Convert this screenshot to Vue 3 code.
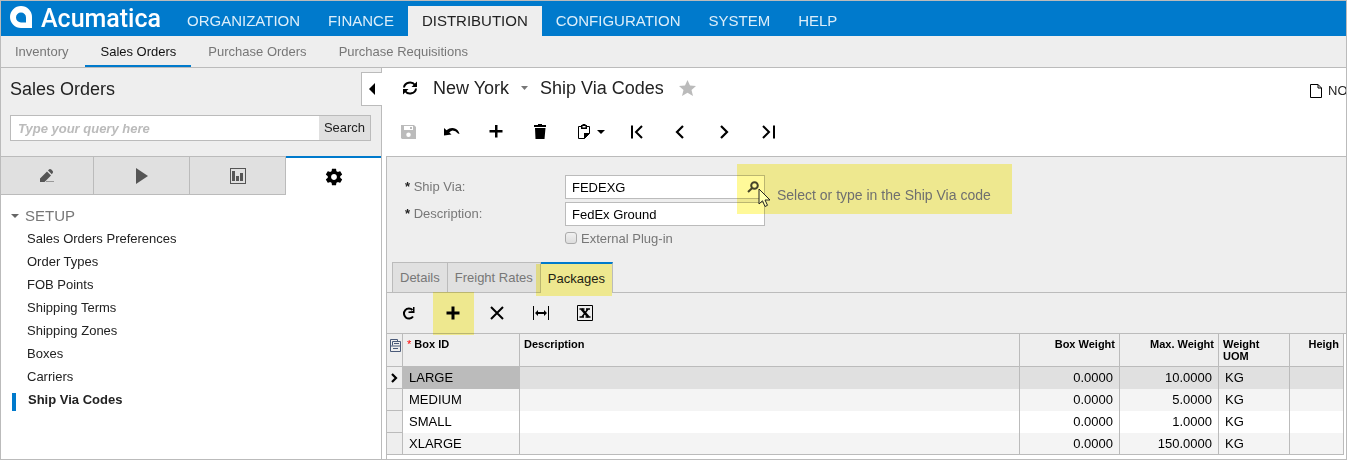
<script setup>
import { ref } from 'vue'

const modules = ['ORGANIZATION', 'FINANCE', 'DISTRIBUTION', 'CONFIGURATION', 'SYSTEM', 'HELP']
const areas = ['Inventory', 'Sales Orders', 'Purchase Orders', 'Purchase Requisitions']
const screens = [
  'Sales Orders Preferences',
  'Order Types',
  'FOB Points',
  'Shipping Terms',
  'Shipping Zones',
  'Boxes',
  'Carriers',
  'Ship Via Codes',
]
const boxes = [
  { id: 'LARGE', box: '0.0000', max: '10.0000', uom: 'KG' },
  { id: 'MEDIUM', box: '0.0000', max: '5.0000', uom: 'KG' },
  { id: 'SMALL', box: '0.0000', max: '1.0000', uom: 'KG' },
  { id: 'XLARGE', box: '0.0000', max: '150.0000', uom: 'KG' },
]
const query = ref('')
const shipVia = ref('FEDEXG')
const description = ref('FedEx Ground')
const plugin = ref(false)
</script>

<template>
  <div class="app">
    <header class="top">
      <a class="brand" href="#">
        <svg width="22" height="22" viewBox="0 0 22 22" aria-hidden="true">
          <path fill="#fff" fill-rule="evenodd" d="M11 0A11 11 0 0 1 22 11V22H11A11 11 0 0 1 11 0ZM11 6.500A5 5 0 0 0 6 11.500A5 5 0 0 0 11 16.500H16V11.500A5 5 0 0 0 11 6.500Z" />
        </svg>
        <span>Acumatica</span>
      </a>
      <nav class="modules">
        <a v-for="m in modules" :key="m" href="#" :class="{ active: m === 'DISTRIBUTION' }">{{ m }}</a>
      </nav>
    </header>
    <nav class="areas">
      <a v-for="a in areas" :key="a" href="#" :class="{ active: a === 'Sales Orders' }">{{ a }}</a>
    </nav>

    <div class="body">
      <aside class="side">
        <div class="side-head">
          <h2>Sales Orders</h2>
          <button class="collapse" aria-label="Collapse">
            <svg width="6" height="12" viewBox="0 0 6 12"><path d="M6 0V12L0 6Z" /></svg>
          </button>
        </div>
        <form class="search" @submit.prevent>
          <input v-model="query" type="text" aria-label="Search query" placeholder="Type your query here" />
          <button type="submit">Search</button>
        </form>
        <div class="side-tabs">
          <button aria-label="Data entry">
            <svg width="16" height="16" viewBox="0 0 16 16" fill="#555">
              <path d="M1 10.500L8 3.500L12 7.500L5.500 14H1ZM9 2.500L10.200 1.300Q11.200 .5 12.300 1.500L13.700 2.900Q14.500 4 13.700 5L12.800 6.300Z" />
              <path fill="#999" d="M7 13H15V14H7Z" />
            </svg>
          </button>
          <button aria-label="Processes">
            <svg width="12" height="16" viewBox="0 0 12 16"><path fill="#555" d="M0 0L12 8L0 16Z" /></svg>
          </button>
          <button aria-label="Reports">
            <svg width="16" height="16" viewBox="0 0 16 16">
              <path fill="#555" fill-rule="evenodd" d="M0 0H16V16H0ZM1 1V15H15V1ZM2 3H5V13H2ZM6 8H9V13H6ZM10 5H13V13H10Z" />
            </svg>
          </button>
          <button class="active" aria-label="Configuration">
            <svg width="20" height="20" viewBox="0 0 24 24">
              <path d="M19.43 12.98c.04-.32.07-.64.07-.98s-.03-.66-.07-.98l2.110-1.650c.19-.15.24-.42.12-.64l-2-3.460c-.12-.22-.39-.3-.61-.22l-2.490 1c-.52-.4-1.080-.73-1.690-.98l-.38-2.650C14.460 2.180 14.250 2 14 2h-4c-.25 0-.46.18-.49.42l-.38 2.650c-.61.25-1.170.59-1.690.98l-2.490-1c-.23-.09-.49 0-.61.22l-2 3.460c-.13.22-.07.49.12.64l2.110 1.650c-.04.32-.07.65-.07.98s.03.66.07.98l-2.110 1.650c-.19.15-.24.42-.12.64l2 3.460c.12.22.39.3.61.22l2.490-1c.52.4 1.080.73 1.690.98l.38 2.650c.03.24.24.42.49.42h4c.25 0 .46-.18.49-.42l.38-2.650c.61-.25 1.170-.59 1.690-.98l2.490 1c.23.09.49 0 .61-.22l2-3.460c.12-.22.07-.49-.12-.64l-2.110-1.650zM12 15.500c-1.930 0-3.500-1.570-3.500-3.500s1.570-3.500 3.500-3.500 3.500 1.570 3.500 3.500-1.570 3.500-3.500 3.500z" />
            </svg>
          </button>
        </div>
        <div class="tree">
          <div class="group">
            <svg width="8" height="4" viewBox="0 0 8 4"><path fill="#666" d="M0 0H8L4 4Z" /></svg>
            <span>SETUP</span>
          </div>
          <ul>
            <li v-for="s in screens" :key="s" :class="{ active: s === 'Ship Via Codes' }"><a href="#">{{ s }}</a></li>
          </ul>
        </div>
      </aside>

      <main class="main">
        <div class="title">
          <button class="plain refresh" aria-label="Refresh page">
            <svg width="16" height="16" viewBox="0 0 16 16">
              <path fill="none" stroke="#000" stroke-width="2" d="M2 7.500A6 5.500 0 0 1 13 5M14 8.500A6 5.500 0 0 1 3 11" />
              <path d="M15 1.500V7H9.500ZM1 14.500V9H6.500Z" />
            </svg>
          </button>
          <button class="plain branch">New York
            <svg width="7" height="4" viewBox="0 0 7 4"><path fill="#777" d="M0 0H7L3.500 4Z" /></svg>
          </button>
          <h1>Ship Via Codes</h1>
          <button class="plain star" aria-label="Add to favorites">
            <svg width="17" height="16" viewBox="0 0 17 16"><path fill="#bbb" d="M8.500 0L11 5.500L17 6L12.500 10L14 16L8.500 12.800L3 16L4.500 10L0 6L6 5.500Z" /></svg>
          </button>
          <a class="notes" href="#">
            <svg width="12" height="14" viewBox="0 0 12 14"><path fill="none" stroke="#000" d="M.5.5H8L11.500 4V13.500H.5ZM8 .5V4H11.500" /></svg>
            <span>NO</span>
          </a>
        </div>

        <div class="toolbar">
          <button aria-label="Save">
            <svg width="15" height="14" viewBox="0 0 15 14"><path fill="#bbb" fill-rule="evenodd" d="M0 0H13L15 2V14H1L0 13ZM3 1V5H12V1ZM9 2H11V4H9ZM7.500 7.500A2.200 2.200 0 1 0 7.500 12A2.200 2.200 0 1 0 7.500 7.500Z" /></svg>
          </button>
          <button aria-label="Undo">
            <svg width="16" height="10" viewBox="0 0 16 10"><path d="M0 1L2.500 3.300Q6 .3 10 1.200Q14.500 2.500 15.500 7L14 6.500Q11.500 3.500 8.500 3.500Q6.500 3.800 5.300 5.500L7.500 7.500L0 8.500Z" /></svg>
          </button>
          <button aria-label="Add">
            <svg width="14" height="14" viewBox="0 0 14 14"><path d="M6 0H8.500V5H13.500V7.500H8.500V12.500H6V7.500H.5V5H6Z" /></svg>
          </button>
          <button aria-label="Delete">
            <svg width="12" height="16" viewBox="0 0 12 16"><path d="M0 1H4V0H8V1H12V3H0ZM1 4H11.500L10.500 15H1.500Z" /></svg>
          </button>
          <button class="wide" aria-label="Clipboard">
            <svg width="12" height="16" viewBox="0 0 12 16"><path fill="none" stroke="#000" d="M3.500 2.500H.5V14.500H6.500L11.500 9.500V2.500H8.500" /><path d="M3 1H4.500V0H7.500V1H9V5H3ZM6 9H12L6 15Z" /><path fill="#fff" d="M4.500 2H7.500V3.500H4.500Z" /></svg>
            <svg width="8" height="4" viewBox="0 0 8 4"><path d="M0 0H8L4 4Z" /></svg>
          </button>
          <button aria-label="First">
            <svg width="14" height="14" viewBox="0 0 14 14"><path fill="none" stroke="#000" stroke-width="2" d="M2 .5V13.500M12 1L6 7L12 13" /></svg>
          </button>
          <button aria-label="Previous">
            <svg width="14" height="14" viewBox="0 0 14 14"><path fill="none" stroke="#000" stroke-width="2.200" d="M9 1L3 7L9 13" /></svg>
          </button>
          <button aria-label="Next">
            <svg width="14" height="14" viewBox="0 0 14 14"><path fill="none" stroke="#000" stroke-width="2.200" d="M3 1L9 7L3 13" /></svg>
          </button>
          <button aria-label="Last">
            <svg width="14" height="14" viewBox="0 0 14 14"><path fill="none" stroke="#000" stroke-width="2" d="M12 .5V13.500M1 1L7 7L1 13" /></svg>
          </button>
        </div>

        <section class="panel">
          <div class="form">
            <label for="via"><b>*</b> Ship Via:</label>
            <div class="lookup">
              <input id="via" v-model="shipVia" type="text" />
              <button class="plain" aria-label="Look up">
                <svg width="12" height="12" viewBox="0 0 12 12" fill="none" stroke="#444" stroke-width="2"><circle cx="7.500" cy="4.500" r="3.300" /><path d="M5.200 7L1 11" /></svg>
              </button>
            </div>
            <label for="desc"><b>*</b> Description:</label>
            <input id="desc" v-model="description" type="text" />
            <label class="check"><input v-model="plugin" type="checkbox" />External Plug-in</label>
          </div>

          <div class="callout">Select or type in the Ship Via code</div>
          <svg class="cursor" width="13" height="20" viewBox="0 0 13 20"><path fill="#ffffb0" stroke="#222" d="M1 1V16L4.500 12.800L7 18.500L9.500 17.300L7 12H12Z" /></svg>

          <div class="tabs">
            <button>Details</button>
            <button>Freight Rates</button>
            <button class="active">Packages</button>
          </div>

          <div class="gridbar">
            <button aria-label="Refresh grid">
              <svg width="14" height="14" viewBox="0 0 14 14"><path fill="none" stroke="#000" stroke-width="2" d="M11 10.500A5 5 0 1 1 10.500 4" /><path d="M12.500 1V7H6.500V5.500L11 5V1Z" /></svg>
            </button>
            <button class="marked" aria-label="Add row">
              <svg width="14" height="14" viewBox="0 0 14 14"><path d="M5.500 .5H8.500V5.500H13.500V8.500H8.500V13.500H5.500V8.500H.5V5.500H5.500Z" /></svg>
            </button>
            <button aria-label="Delete row">
              <svg width="14" height="14" viewBox="0 0 14 14"><path fill="none" stroke="#000" stroke-width="2" d="M1 1L13 13M13 1L1 13" /></svg>
            </button>
            <button aria-label="Fit columns">
              <svg width="16" height="14" viewBox="0 0 16 14"><path d="M0 0H1V14H0ZM15 0H16V14H15ZM2 7L5 4V6H11V4L14 7L11 10V8H5V10Z" /></svg>
            </button>
            <button aria-label="Export to Excel">
              <svg width="16" height="16" viewBox="0 0 16 16"><path fill="none" stroke="#000" d="M.5.5H15.500V15.500H.5Z" /><path fill="none" stroke="#000" stroke-width="2.500" d="M4.500 4L11.500 12" /><path fill="none" stroke="#000" stroke-width="1.500" d="M11 4L5 12M2.500 4H7.500M9 4H13M2.500 12H7M8.500 12H13.500" /></svg>
            </button>
          </div>

          <div class="grid">
            <table>
              <colgroup>
                <col class="c-sel" /><col class="c-id" /><col /><col class="c-num" /><col class="c-max" /><col class="c-uom" /><col class="c-h" />
              </colgroup>
              <thead>
                <tr>
                  <th class="sel">
                    <svg width="11" height="13" viewBox="0 0 11 13" fill="none" stroke="#4a5a78"><path d="M.5 12.500V.5H7.500V2.500M2.500 6.500V2.500H10.500V12.500H.5M.5 7H10.500M4 4.500H9M3 9.500H8" /></svg>
                  </th>
                  <th class="req"><i>*</i> Box ID</th>
                  <th>Description</th>
                  <th class="num">Box Weight</th>
                  <th class="num">Max. Weight</th>
                  <th>Weight UOM</th>
                  <th class="num">Heigh</th>
                </tr>
              </thead>
              <tbody>
                <tr v-for="(b, i) in boxes" :key="b.id" :class="{ current: i === 0 }">
                  <td class="sel">
                    <svg v-if="i === 0" width="7" height="10" viewBox="0 0 7 10"><path fill="none" stroke="#000" stroke-width="2.200" d="M1 1L5 5L1 9" /></svg>
                  </td>
                  <td class="id">{{ b.id }}</td>
                  <td></td>
                  <td class="num">{{ b.box }}</td>
                  <td class="num">{{ b.max }}</td>
                  <td>{{ b.uom }}</td>
                  <td></td>
                </tr>
              </tbody>
            </table>
          </div>
        </section>
      </main>
    </div>
  </div>
</template>

<style>
body {
  margin: 0;
}
</style>

<style scoped>
* {
  box-sizing: border-box;
}
.app {
  --line: #bbb;
  --blue: #007acc;
  --panel: #eee;
  --mark: #fff999;
  display: flex;
  flex-direction: column;
  min-height: 100vh;
  border: 1px solid var(--line);
  overflow: hidden;
  background: #fff;
  color: #222;
  font: 13px/16px "Liberation Sans", Arial, sans-serif;
}
a {
  color: inherit;
  text-decoration: none;
}
button,
input {
  font: inherit;
  color: inherit;
  margin: 0;
}
button {
  padding: 0;
  border: 0;
  background: none;
}
svg {
  display: block;
  flex: none;
}
h1,
h2 {
  margin: 0;
  font-size: 18px;
  line-height: 24px;
  font-weight: normal;
}

.top {
  display: flex;
  height: 35px;
  background: var(--blue);
}
.brand {
  display: flex;
  align-items: flex-start;
  gap: 9px;
  width: 172px;
  padding: 5px 0 0 9px;
  color: #fff;
  font: 500 25px/26px Roboto, sans-serif;
}
.modules {
  display: flex;
  padding-top: 5px;
  font-size: 15px;
  line-height: 30px;
  color: #dceefa;
}
.modules a {
  padding: 0 14px;
}
.modules .active {
  background: var(--panel);
  color: #222;
}
.areas {
  display: flex;
  gap: 2px;
  height: 32px;
  border-bottom: 1px solid var(--line);
  background: var(--panel);
  color: #777;
  line-height: 31px;
}
.areas a {
  padding: 0 15px;
}
.areas a:first-child {
  padding-left: 14px;
}
.areas .active {
  color: #111;
  border-bottom: 2px solid var(--blue);
}

.body {
  display: flex;
  flex: 1;
}
.side {
  flex: none;
  width: 381px;
  border-right: 1px solid var(--line);
}
.side-head {
  display: flex;
  justify-content: space-between;
  height: 47px;
  padding: 4px 0 0 9px;
  background: var(--panel);
}
.side-head h2 {
  padding-top: 5px;
}
.collapse {
  display: flex;
  align-items: center;
  justify-content: center;
  width: 21px;
  height: 34px;
  margin-right: -1px;
  border: 1px solid var(--line);
  border-right: 0;
  background: #fff;
}
.search {
  display: flex;
  padding: 0 10px 15px 9px;
  background: var(--panel);
}
.search input {
  flex: 1;
  min-width: 0;
  height: 26px;
  padding: 0 7px;
  border: 1px solid var(--line);
  border-right: 0;
  outline: 0;
}
.search input::placeholder {
  color: #bbb;
  font-style: italic;
  font-weight: bold;
  opacity: 1;
}
.search button {
  width: 52px;
  border: 1px solid var(--line);
  border-left: 0;
  background: #e0e0e0;
}
.side-tabs {
  display: grid;
  grid-template-columns: 93px 96px 96px 1fr;
}
.side-tabs button {
  display: flex;
  align-items: center;
  justify-content: center;
  height: 39px;
  border: 1px solid var(--line);
  border-left: 0;
  background: #e0e0e0;
}
.side-tabs .active {
  border: 0;
  border-top: 2px solid var(--blue);
  background: #fff;
}
.tree {
  padding: 10px 0 0 10px;
}
.group {
  display: flex;
  align-items: center;
  gap: 6px;
  height: 22px;
  color: #777;
  font-size: 15px;
}
.tree ul {
  margin: 0;
  padding: 0;
  list-style: none;
}
.tree li {
  display: flex;
  align-items: flex-end;
  height: 23px;
}
.tree li a {
  padding-left: 16px;
  line-height: 23px;
}
.tree li.active {
  font-weight: bold;
}
.tree li.active::before {
  content: "";
  width: 4px;
  height: 18px;
  margin-left: 1px;
  background: var(--blue);
}
.tree li.active a {
  padding-left: 12px;
}

.main {
  flex: 1;
  min-width: 0;
  display: flex;
  flex-direction: column;
  padding-left: 4px;
}
.title {
  display: flex;
  align-items: center;
  height: 40px;
}
.plain {
  display: flex;
  align-items: center;
}
.refresh {
  margin: 0 15px 0 16px;
}
.branch {
  gap: 12px;
  margin-right: 12px;
  font-size: 18px;
  line-height: 24px;
}
.star {
  margin-left: 15px;
}
.notes {
  display: flex;
  align-items: center;
  gap: 6px;
  width: 36px;
  margin-left: auto;
  padding-top: 5px;
}
.toolbar {
  display: flex;
  height: 48px;
}
.toolbar button,
.gridbar button {
  display: flex;
  align-items: center;
  justify-content: center;
  width: 44px;
}
.toolbar .wide {
  gap: 7px;
  width: 53px;
  padding-left: 6px;
}
.panel {
  position: relative;
  flex: 1;
  display: flex;
  flex-direction: column;
  border: 1px solid var(--line);
  border-width: 1px 0 0 1px;
  background: var(--panel);
}
.form {
  display: grid;
  grid-template-columns: 160px 200px;
  gap: 3px 0;
  padding: 18px 0 15px 18px;
  color: #777;
}
.form > label {
  line-height: 23px;
}
.form b {
  color: #222;
}
.form input[type="text"] {
  width: 100%;
  height: 24px;
  padding: 0 6px;
  border: 1px solid var(--line);
  background: #fff;
  color: #000;
}
.lookup {
  display: flex;
}
.lookup button {
  width: 18px;
  margin-left: -18px;
}
.check {
  grid-column: 2;
  display: flex;
  align-items: center;
  gap: 4px;
  height: 18px;
}
.check input {
  appearance: none;
  width: 12px;
  height: 12px;
  border: 1px solid #aaa;
  border-radius: 3px;
  background: linear-gradient(#f0f0f0, #ddd);
}
.callout {
  position: absolute;
  left: 350px;
  top: 7px;
  width: 275px;
  height: 50px;
  padding: 6px 0 0 40px;
  background: var(--mark);
  mix-blend-mode: multiply;
  color: #777;
  font-size: 14px;
  line-height: 50px;
  white-space: nowrap;
  pointer-events: none;
}
.cursor {
  position: absolute;
  left: 371px;
  top: 31px;
}
.tabs {
  display: flex;
  padding-left: 5px;
  border-bottom: 1px solid var(--line);
  color: #777;
}
.tabs button {
  position: relative;
  height: 30px;
  padding: 0 7px;
  border: 1px solid var(--line);
  border-width: 1px 1px 0 0;
  background: #e0e0e0;
}
.tabs button:first-child {
  border-left-width: 1px;
}
.tabs .active {
  border-top: 2px solid var(--blue);
  background: var(--panel);
  color: #222;
  margin-bottom: -1px;
  height: 31px;
}
.tabs .active::after,
.marked::after {
  content: "";
  position: absolute;
  background: var(--mark);
  mix-blend-mode: multiply;
}
.tabs .active::after {
  inset: 0 0 -3px -5px;
}
.gridbar {
  display: flex;
  height: 41px;
  border-bottom: 1px solid var(--line);
}
.marked {
  position: relative;
}
.marked::after {
  inset: -1px 1px -2px 2px;
}
.grid {
  flex: 1;
  padding-right: 2px;
  background: #fff;
}
table {
  width: 100%;
  table-layout: fixed;
  border-spacing: 0;
}
.c-sel {
  width: 16px;
}
.c-id {
  width: 117px;
}
.c-num {
  width: 100px;
}
.c-max {
  width: 99px;
}
.c-uom {
  width: 71px;
}
.c-h {
  width: 54px;
}
th,
td {
  border-right: 1px solid var(--line);
}
th {
  height: 33px;
  padding: 4px 4px 0;
  border-bottom: 1px solid var(--line);
  background: var(--panel);
  color: #000;
  font-size: 11px;
  line-height: 12px;
  text-align: left;
  vertical-align: top;
}
th i {
  color: #f00;
  font-style: normal;
  font-weight: normal;
}
td {
  height: 22px;
  padding: 0 6px;
  background: #f4f4f4;
  color: #000;
}
tbody tr:nth-child(3) td {
  background: #fff;
}
tbody tr:last-child td {
  border-bottom: 1px solid var(--line);
}
tbody .current td {
  background: #e0e0e0;
}
tbody .current .id {
  background: #bbb;
}
tbody tr td.sel {
  padding: 0 0 0 4px;
  border-bottom: 1px solid var(--line);
  background: var(--panel);
}
th.sel {
  padding: 5px 0 0 3px;
}
.num {
  text-align: right;
}
</style>
